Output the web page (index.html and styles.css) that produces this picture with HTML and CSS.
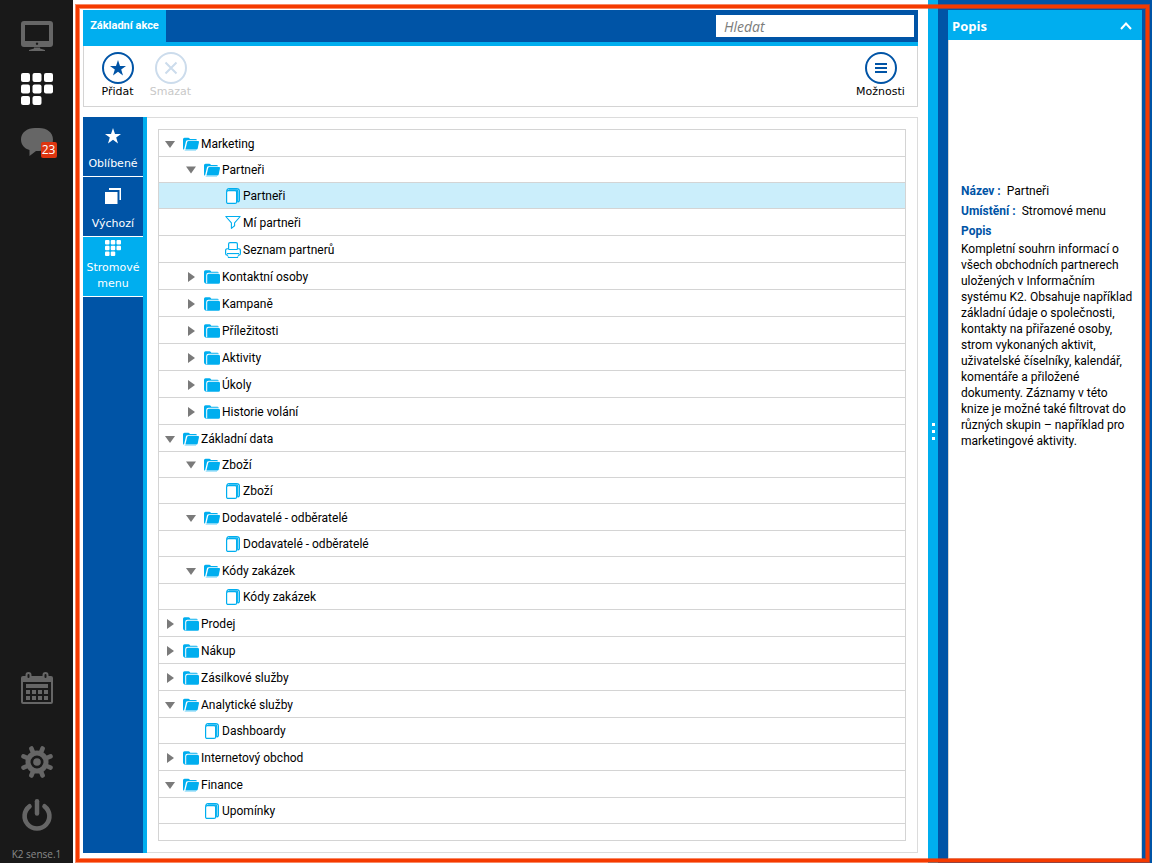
FILE: index.html
```html
<!DOCTYPE html>
<html lang="cs">
<head>
<meta charset="utf-8">
<title>K2 – Základní akce</title>
<link rel="stylesheet" href="styles.css">
</head>
<body>
<svg class="defs" aria-hidden="true">
  <symbol id="folder" viewBox="0 0 16 14">
    <path d="M0 11.500V1.800Q0 .3 1.500 .3H5.500Q6.300 .3 6.800 1L7.300 1.700H13.300Q14.500 1.700 14.800 2.700H4.500Q2.200 2.700 2.200 5V13.500Q0 13.300 0 11.500Z"/>
    <path d="M3.200 5.300Q3.200 3.800 4.700 3.800H14.500Q16 3.800 16 5.300V12.200Q16 13.700 14.500 13.700H3.200Q1.500 13.700 1 13.200H3.200Z"/>
  </symbol>
  <symbol id="folder-open" viewBox="0 0 16 14">
    <path d="M0 11.500V2.300Q0 .8 1.500 .8H5.300Q6.100 .8 6.600 1.500L7 2.100H12.500Q13.800 2.100 14 3.200H4.500Q3.300 3.200 3 4.300L1 12.800Q0 12.500 0 11.500Z"/>
    <path d="M4.200 5Q4.500 4 5.500 4H15.200Q16.200 4 16 5L14.700 11.400Q14.400 12.500 13.300 12.500H2.400Z"/>
    <path opacity=".6" d="M1.500 12.900H13V13.500H1.800Z"/>
  </symbol>
  <symbol id="book" viewBox="0 0 16 16">
    <rect x="1.600" y="2.600" width="10" height="12.800" rx="1.500" fill="#fff" stroke="currentColor" stroke-width="1.200"/>
    <path d="M1.800 3.500Q1.800 .6 4 .6H11.500Q14.400 .6 14.400 3V12.500Q14.400 14 12.500 14.200M4 2.200H11.500Q12.700 2.200 12.700 3.500V13.800" fill="none" stroke="currentColor" stroke-width="1.200"/>
  </symbol>
  <symbol id="filter" viewBox="0 0 16 16">
    <path d="M.8 1.500H15.200L9.600 7.800V10.800L6.400 13.400V7.800Z" fill="none" stroke="currentColor" stroke-width="1.100" stroke-linejoin="round"/>
  </symbol>
  <symbol id="printer" viewBox="0 0 16 16">
    <path d="M3.600 7.500V2Q3.600 .6 5 .6H11Q12.400 .6 12.400 2V7.500M3.600 6.500Q.6 6.500 .6 8.500V11.500Q.6 13.200 2.200 13.200H13.800Q15.400 13.200 15.400 11.500V8.500Q15.400 6.500 12.400 6.500M3.600 7.500H12.400M2 11.500H14M3 13.200L3.500 15.400H12.500L13 13.200" fill="none" stroke="currentColor" stroke-width="1.200"/>
    <path d="M2.800 12.200H13.200L12.600 14.800H3.400Z" fill="#fff"/>
  </symbol>
  <symbol id="star" viewBox="0 0 16 16">
    <path d="M8 0L10 5.900H16L11.200 9.500L13 15.400L8 11.800L3 15.400L4.800 9.500L0 5.900H6Z"/>
  </symbol>
  <symbol id="grid" viewBox="0 0 32 32">
    <rect width="9" height="9" rx="2"/><rect x="11.500" width="9" height="9" rx="2"/><rect x="23" width="9" height="9" rx="2"/>
    <rect y="11.500" width="9" height="9" rx="2"/><rect x="11.500" y="11.500" width="9" height="9" rx="2"/><rect x="23" y="11.500" width="9" height="9" rx="2"/>
    <rect y="23" width="9" height="9" rx="2"/><rect x="11.500" y="23" width="9" height="9" rx="2"/>
  </symbol>
</svg>

<div class="app">
  <nav class="rail" aria-label="Hlavní navigace">
    <button class="rail-btn" type="button" aria-label="Plocha">
      <svg viewBox="0 0 32 32"><path fill-rule="evenodd" d="M3 1H29Q32 1 32 4V24Q32 27 29 27H3Q0 27 0 24V4Q0 1 3 1ZM4 5V21H28V5ZM16 22.500A1.200 1.200 0 1 0 16.010 22.500Z"/><path d="M13 27.500H19V28.500L24 30V31H8V30L13 28.500Z"/></svg>
    </button>
    <button class="rail-btn active" type="button" aria-label="Menu">
      <svg><use href="#grid"/></svg>
    </button>
    <button class="rail-btn" type="button" aria-label="Zprávy">
      <svg viewBox="0 0 32 32"><path d="M14 2H18C26 2 32 6.500 32 13.500S26 25 18 25H15L8.500 30V24C3 22.500 0 18.500 0 13.500C0 6.500 6 2 14 2Z"/></svg>
      <span class="badge">23</span>
    </button>
    <button class="rail-btn calendar" type="button" aria-label="Kalendář">
      <svg viewBox="0 0 32 32"><path fill-rule="evenodd" d="M2 4H30Q32 4 32 6V30Q32 32 30 32H2Q0 32 0 30V6Q0 4 2 4ZM2 10V30H30V10Z"/><path d="M5 12H27V16H5ZM5 18H9V22H5ZM11 18H15V22H11ZM17 18H21V22H17ZM23 18H27V22H23ZM5 24H9V28H5ZM11 24H15V28H11ZM17 24H21V28H17ZM23 24H27V28H23Z"/><g fill="#191919" stroke="#666" stroke-width="2"><rect x="5.500" y="1" width="4" height="6" rx="2"/><rect x="22.500" y="1" width="4" height="6" rx="2"/></g></svg>
    </button>
    <button class="rail-btn gear" type="button" aria-label="Nastavení">
      <svg viewBox="-16 -16 32 32"><g fill="none" stroke="#666"><circle r="9" stroke-width="5"/><g stroke-width="4.600" stroke-linecap="round"><path d="M4 -9.700L5.600 -13.500M9.700 -4L13.500 -5.600M9.700 4L13.500 5.600M4 9.700L5.600 13.500M-4 9.700L-5.600 13.500M-9.700 4L-13.500 5.600M-9.700 -4L-13.500 -5.600M-4 -9.700L-5.600 -13.500"/></g></g><circle r="3.800"/></svg>
    </button>
    <button class="rail-btn power" type="button" aria-label="Odhlásit">
      <svg viewBox="0 0 32 32"><g fill="none" stroke="#666" stroke-linecap="round"><path stroke-width="4.500" d="M16 2.300V14.500"/><path stroke-width="4.600" d="M8.500 7.300A12.400 12.400 0 1 0 23.500 7.300"/></g></svg>
    </button>
    <span class="version">K2 sense.1</span>
  </nav>

  <main class="main">
    <header class="ribbon">
      <button class="ribbon-tab" type="button">Základní akce</button>
      <input class="search" type="text" placeholder="Hledat" aria-label="Hledat">
    </header>
    <div class="toolbar">
      <button class="tool" type="button"><span class="ring"><svg><use href="#star"/></svg></span>Přidat</button>
      <button class="tool" type="button" disabled><span class="ring"><svg viewBox="0 0 16 16"><path d="M2.500 2.500L13.500 13.500M13.500 2.500L2.500 13.500" stroke="currentColor" stroke-width="2"/></svg></span>Smazat</button>
      <button class="tool options" type="button"><span class="ring"><svg viewBox="0 0 16 16"><path d="M2 4H14M2 8H14M2 12H14" stroke="currentColor" stroke-width="2"/></svg></span>Možnosti</button>
    </div>

    <div class="workspace">
      <nav class="side-tabs" aria-label="Pohledy">
        <button class="side-tab" type="button"><svg><use href="#star"/></svg>Oblíbené</button>
        <button class="side-tab" type="button"><svg viewBox="0 0 16 16"><path d="M4 0H16V12H14.500V2H4ZM0 4H12.500V16H0Z"/></svg>Výchozí</button>
        <button class="side-tab current" type="button"><svg><use href="#grid"/></svg>Stromové menu</button>
      </nav>
      <div class="tree-panel">
        <ul class="tree">
          <li class="row"><button class="toggle open" aria-label="Sbalit"></button><svg class="folder"><use href="#folder-open"/></svg>Marketing</li>
          <li class="row short l2"><button class="toggle open" aria-label="Sbalit"></button><svg class="folder"><use href="#folder-open"/></svg>Partneři</li>
          <li class="row short l3 selected"><svg class="leaf"><use href="#book"/></svg>Partneři</li>
          <li class="row l3"><svg class="leaf"><use href="#filter"/></svg>Mí partneři</li>
          <li class="row l3"><svg class="leaf"><use href="#printer"/></svg>Seznam partnerů</li>
          <li class="row l2"><button class="toggle" aria-label="Rozbalit"></button><svg class="folder"><use href="#folder"/></svg>Kontaktní osoby</li>
          <li class="row l2"><button class="toggle" aria-label="Rozbalit"></button><svg class="folder"><use href="#folder"/></svg>Kampaně</li>
          <li class="row l2"><button class="toggle" aria-label="Rozbalit"></button><svg class="folder"><use href="#folder"/></svg>Příležitosti</li>
          <li class="row l2"><button class="toggle" aria-label="Rozbalit"></button><svg class="folder"><use href="#folder"/></svg>Aktivity</li>
          <li class="row l2"><button class="toggle" aria-label="Rozbalit"></button><svg class="folder"><use href="#folder"/></svg>Úkoly</li>
          <li class="row l2"><button class="toggle" aria-label="Rozbalit"></button><svg class="folder"><use href="#folder"/></svg>Historie volání</li>
          <li class="row"><button class="toggle open" aria-label="Sbalit"></button><svg class="folder"><use href="#folder-open"/></svg>Základní data</li>
          <li class="row short l2"><button class="toggle open" aria-label="Sbalit"></button><svg class="folder"><use href="#folder-open"/></svg>Zboží</li>
          <li class="row short l3"><svg class="leaf"><use href="#book"/></svg>Zboží</li>
          <li class="row l2"><button class="toggle open" aria-label="Sbalit"></button><svg class="folder"><use href="#folder-open"/></svg>Dodavatelé - odběratelé</li>
          <li class="row short l3"><svg class="leaf"><use href="#book"/></svg>Dodavatelé - odběratelé</li>
          <li class="row l2"><button class="toggle open" aria-label="Sbalit"></button><svg class="folder"><use href="#folder-open"/></svg>Kódy zakázek</li>
          <li class="row short l3"><svg class="leaf"><use href="#book"/></svg>Kódy zakázek</li>
          <li class="row"><button class="toggle" aria-label="Rozbalit"></button><svg class="folder"><use href="#folder"/></svg>Prodej</li>
          <li class="row"><button class="toggle" aria-label="Rozbalit"></button><svg class="folder"><use href="#folder"/></svg>Nákup</li>
          <li class="row"><button class="toggle" aria-label="Rozbalit"></button><svg class="folder"><use href="#folder"/></svg>Zásilkové služby</li>
          <li class="row"><button class="toggle open" aria-label="Sbalit"></button><svg class="folder"><use href="#folder-open"/></svg>Analytické služby</li>
          <li class="row short l2"><svg class="leaf"><use href="#book"/></svg>Dashboardy</li>
          <li class="row"><button class="toggle" aria-label="Rozbalit"></button><svg class="folder"><use href="#folder"/></svg>Internetový obchod</li>
          <li class="row"><button class="toggle open" aria-label="Sbalit"></button><svg class="folder"><use href="#folder-open"/></svg>Finance</li>
          <li class="row short l2"><svg class="leaf"><use href="#book"/></svg>Upomínky</li>
        </ul>
      </div>
    </div>
  </main>

  <div class="splitter"><i></i><i></i><i></i></div>

  <aside class="detail">
    <header class="detail-head">
      <h2>Popis</h2>
      <button type="button" aria-label="Sbalit panel"><svg viewBox="0 0 12 8"><path d="M1 7L6 1.500L11 7" fill="none" stroke="#fff" stroke-width="2"/></svg></button>
    </header>
    <div class="detail-body">
      <p class="field"><b>Název :</b>Partneři</p>
      <p class="field"><b>Umístění :</b>Stromové menu</p>
      <h3>Popis</h3>
      <p class="text">Kompletní souhrn informací o<br>všech obchodních partnerech<br>uložených v Informačním<br>systému K2. Obsahuje například<br>základní údaje o společnosti,<br>kontakty na přiřazené osoby,<br>strom vykonaných aktivit,<br>uživatelské číselníky, kalendář,<br>komentáře a přiložené<br>dokumenty. Záznamy v této<br>knize je možné také filtrovat do<br>různých skupin – například pro<br>marketingové aktivity.</p>
    </div>
  </aside>

  <div class="frame"></div>
</div>
</body>
</html>
```
FILE: styles.css
```css
:root {
  --blue: #0054a6;
  --cyan: #00aeef;
  --line: #d4d4d4;
  --dark: #191919;
}

* { box-sizing: border-box; }

body {
  margin: 0;
  background: #fff;
  color: #000;
  font: 12px/16px Roboto, "Open Sans", sans-serif;
}

button {
  border: 0;
  padding: 0;
  background: none;
  color: inherit;
  font: inherit;
}

svg { display: block; fill: currentColor; }
h2, h3, p, ul { margin: 0; padding: 0; }

.defs { position: absolute; width: 0; height: 0; }

.app {
  position: relative;
  display: flex;
  min-height: 100vh;
}

/* left rail */
.rail {
  width: 73px;
  margin-bottom: 1px;
  padding-top: 20px;
  display: flex;
  flex-direction: column;
  align-items: center;
  gap: 21px;
  background: var(--dark);
  color: #666;
  font-family: "Open Sans", sans-serif;
}

.rail-btn { position: relative; width: 32px; height: 32px; }
.rail-btn svg { width: 32px; height: 32px; }
.rail-btn.active { color: #fff; }
.rail-btn.calendar { margin-top: auto; }
.rail-btn.gear { margin-top: 21px; }

.badge {
  position: absolute;
  right: -4px;
  bottom: 0;
  width: 16px;
  height: 16px;
  border-radius: 2px;
  background: #dc3510;
  color: #fff;
  line-height: 16px;
  text-align: center;
}

.version {
  margin-top: -5px;
  padding-bottom: 1px;
  font-size: 10px;
  line-height: 15px;
  color: #8a8a8a;
}

/* main column */
.main {
  flex: 1;
  display: flex;
  flex-direction: column;
  padding: 10px 10px 11px;
  min-width: 0;
}

.ribbon {
  height: 36px;
  display: flex;
  justify-content: space-between;
  background: var(--blue);
  border-bottom: 4px solid var(--cyan);
}

.ribbon-tab {
  width: 83px;
  background: var(--cyan);
  color: #fff;
  font-size: 11px;
  font-weight: 700;
}

.search {
  width: 198px;
  height: 22px;
  margin: 5px 4px 0 0;
  padding: 0 8px;
  border: 0;
  background: #fff;
  font: italic 14px "Open Sans", sans-serif;
}
.search::placeholder { color: #7c7c7c; }

.toolbar {
  display: flex;
  padding: 6px 10px 6px 7px;
  border: 1px solid var(--line);
  border-top: 0;
}

.tool {
  width: 53px;
  display: flex;
  flex-direction: column;
  align-items: center;
  white-space: nowrap;
  font: 11px/16px "DejaVu Sans", sans-serif;
}
.tool.options { margin-left: auto; }
.tool:disabled { color: #c8c8c8; }

.ring {
  width: 32px;
  height: 32px;
  display: grid;
  place-items: center;
  border: 2px solid var(--blue);
  border-radius: 50%;
  color: var(--blue);
}
.ring svg { width: 16px; height: 16px; }
.tool:disabled .ring { color: #ccdcec; border-color: #ccdcec; }

.workspace {
  flex: 1;
  display: flex;
  margin-top: 10px;
}

.side-tabs {
  width: 64px;
  background: var(--blue);
  border-right: 4px solid var(--cyan);
}

.side-tab {
  width: 100%;
  height: 60px;
  display: flex;
  flex-direction: column;
  align-items: center;
  justify-content: space-between;
  padding: 11px 0 4px;
  border-bottom: 1px solid #fff;
  color: #fff;
  font: 11px/16px "DejaVu Sans", sans-serif;
}
.side-tab.current { padding-top: 3px; background: var(--cyan); }
.side-tab svg { width: 16px; height: 16px; }

.tree-panel {
  flex: 1;
  display: flex;
  padding: 11px;
  border: 1px solid #dcdcdc;
  border-left: 0;
}

.tree {
  flex: 1;
  border: 1px solid var(--line);
  list-style: none;
}

.row {
  height: 27px;
  display: flex;
  align-items: center;
  padding: 2px 0 0 6px;
  border-bottom: 1px solid var(--line);
}
.row.short { height: 26px; padding-top: 0; }
.row.l2 { padding-left: 27px; }
.row.l3 { padding-left: 48px; }
.row.selected { background: #cbeefb; }

.toggle {
  width: 10px;
  height: 10px;
  margin-right: 8px;
  background: #7a7a7a;
  clip-path: polygon(20% 0, 90% 50%, 20% 100%);
}
.toggle.open { clip-path: polygon(0 20%, 100% 20%, 50% 90%); }

.folder { width: 16px; height: 14px; margin-right: 2px; color: var(--cyan); }
.leaf { width: 16px; height: 16px; margin: 0 2px 0 18px; color: var(--cyan); }

/* splitter */
.splitter {
  width: 10px;
  margin-bottom: 1px;
  display: flex;
  flex-direction: column;
  align-items: center;
  justify-content: center;
  gap: 4px;
  background: var(--cyan);
}
.splitter i { width: 3px; height: 3px; background: #fff; }

/* description */
.detail {
  width: 214px;
  margin-bottom: 1px;
  display: flex;
  flex-direction: column;
  padding: 10px 10px 4px;
  background: var(--blue);
}

.detail-head {
  height: 30px;
  display: flex;
  align-items: center;
  justify-content: space-between;
  padding: 2px 10px 0 4px;
  background: var(--cyan);
  color: #fff;
}
.detail-head h2 { font: 700 13px/18px "Open Sans", sans-serif; }
.detail-head svg { width: 12px; height: 8px; }

.detail-body {
  flex: 1;
  padding: 141px 0 0 12px;
  border: 1px solid var(--line);
  border-top: 0;
  background: #fff;
}
.field { line-height: 20px; }
.field b { margin-right: 6px; color: var(--blue); }
.detail-body h3 { font-size: 12px; line-height: 20px; color: var(--blue); }

/* highlight frame over the working area */
.frame {
  position: absolute;
  inset: 5px 3px 2px 76px;
  border: 3px solid #f53a00;
  box-shadow: 0 0 0 1px rgba(245, 58, 0, .6), inset 0 0 0 1px rgba(245, 58, 0, .6);
  pointer-events: none;
}
```
